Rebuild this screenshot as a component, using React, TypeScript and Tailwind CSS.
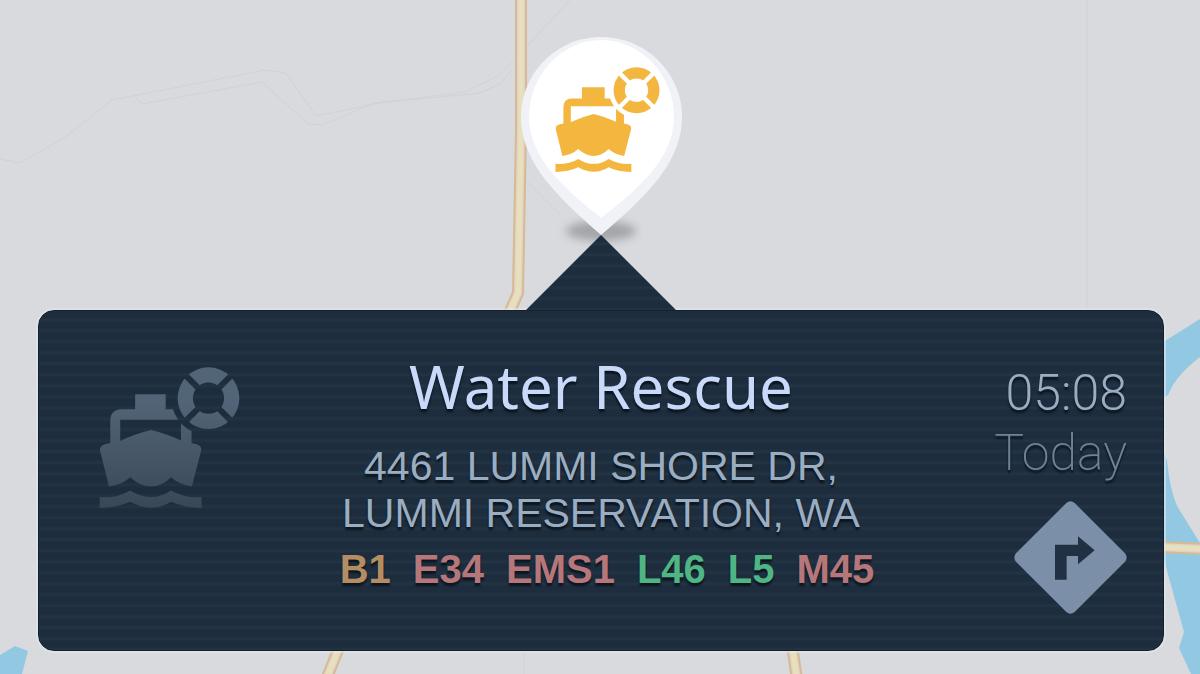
import { useId } from 'react';

const units = [
  { name: 'B1', color: 'text-[#b58d62]' },
  { name: 'E34', color: 'text-[#b57779]' },
  { name: 'EMS1', color: 'text-[#b57779]' },
  { name: 'L46', color: 'text-[#4fb584]' },
  { name: 'L5', color: 'text-[#4fb584]' },
  { name: 'M45', color: 'text-[#b57779]' },
];

function MapBackground() {
  return (
    <svg
      className="absolute inset-0 w-full h-full"
      viewBox="0 0 1200 674"
      preserveAspectRatio="xMidYMid slice"
      fill="none"
      aria-hidden="true"
    >
      {/* Water */}
      <g fill="#93c8e3">
        <path d="M1160 344 L1200 319 V357 Q1176 375 1168 395 L1160 400 Z" />
        <path d="M1160 440 L1167 461 Q1170 490 1177 506 L1200 543 V674 H1191 L1179 648 L1184 632 L1166 567 L1160 545 Z" />
        <path d="M0 655 L15 646 L28 651 L22 674 H0 Z" />
      </g>

      {/* Minor roads and trails */}
      <g stroke="#d0d2d5" strokeWidth="1">
        <path d="M0 159 L20 163 L64 138 L112 100 L265 70 L286 73 L316 116 L380 103 L465 92 L500 75 L570 0" />
        <path d="M136 97 L142 104 L262 82 L308 124 L323 125 L374 103 L430 98 L480 93 L500 84 L512 70" />
        <path d="M1087 0 V310" />
        <path d="M524 651 V674 M526 180 L560 215" />
      </g>

      {/* Highways */}
      <g strokeLinejoin="round">
        <g stroke="#d8b995" strokeWidth="12">
          <path d="M521 -5 V130 L518 293 L507 318" />
          <path d="M340 645 L326 680" />
          <path d="M792 645 L797 680" />
          <path d="M1160 547 L1205 549" />
        </g>
        <g stroke="#dfd5c5" strokeWidth="8">
          <path d="M521 -5 V130 L518 293 L507 318" />
          <path d="M340 645 L326 680" />
          <path d="M792 645 L797 680" />
          <path d="M1160 547 L1205 549" />
        </g>
        <g stroke="#e8e0bd" strokeWidth="5">
          <path d="M521 -5 V130 L518 293 L507 318" />
          <path d="M340 645 L326 680" />
          <path d="M792 645 L797 680" />
          <path d="M1160 547 L1205 549" />
        </g>
      </g>
    </svg>
  );
}

function WaterRescueIcon({ className, from, to }: { className: string; from: string; to: string }) {
  const id = useId();
  return (
    <svg className={className} viewBox="0 0 425 425" aria-hidden="true">
      <defs>
        <linearGradient id={`${id}-fill`} gradientUnits="userSpaceOnUse" x1="0" y1="0" x2="0" y2="425">
          <stop offset="0.25" stopColor={from} />
          <stop offset="1" stopColor={to} />
        </linearGradient>
        <mask id={`${id}-ship`} maskUnits="userSpaceOnUse" x="0" y="0" width="425" height="425">
          <rect width="425" height="425" fill="white" />
          <circle cx="330" cy="94" r="112" fill="black" />
        </mask>
        <mask id={`${id}-buoy`} maskUnits="userSpaceOnUse" x="0" y="0" width="425" height="425">
          <rect width="425" height="425" fill="white" />
          <circle cx="330" cy="94" r="47" fill="black" />
          <path d="M255 19 L405 169 M405 19 L255 169" stroke="black" strokeWidth="18" />
        </mask>
      </defs>
      <g fill={`url(#${id}-fill)`}>
        <g mask={`url(#${id}-ship)`}>
          <path d="M109 82 H201 V127 H244 Q279 127 279 162 V240 H247 V159 H64 V240 H34 V162 Q34 127 69 127 H109 Z" />
          <path d="M157 190 Q205 201 252 224 L292 232 Q311 237 308 252 L280 360 Q243 355 217 332 Q190 360 157 360 Q124 360 94 332 Q70 355 30 360 L3 252 Q1 237 20 232 L62 224 Q109 201 157 190 Z" />
        </g>
        <path d="M2 392 Q55 396 94 372 Q125 392 157 392 Q189 392 217 372 Q260 396 309 392 V425 Q255 424 217 406 Q189 424 157 424 Q125 424 94 406 Q55 424 2 425 Z" />
        <circle cx="330" cy="94" r="93" mask={`url(#${id}-buoy)`} />
      </g>
    </svg>
  );
}

function Marker() {
  return (
    <div className="relative flex justify-center w-[161px] h-[198px]">
      <div className="absolute bottom-[-6px] w-[70px] h-5 rounded-[50%] bg-[#a3a5aa] blur-[4px]" />
      <svg className="absolute inset-0 w-full h-full" viewBox="0 0 161 198" aria-hidden="true">
        <path d="M80 0 C36 0 0 36 0 80 C0 122 30 155 80 198 C131 155 161 122 161 80 C161 36 125 0 80 0 Z" fill="#f0f2f7" />
        <path d="M80 3 C41 3 8 38 8 80 C8 118 38 148 80 181 C123 148 153 118 153 80 C153 38 120 3 80 3 Z" fill="white" />
      </svg>
      <WaterRescueIcon className="relative mt-[30px] ml-3 w-[105px] h-[105px]" from="#f3b63f" to="#f3b63f" />
    </div>
  );
}

function DirectionsIcon() {
  return (
    <svg className="w-full h-full" viewBox="0 0 339 339" aria-hidden="true">
      <path
        d="M157 6 Q169 -4 182 6 L333 157 Q343 169 333 182 L182 333 Q169 343 157 333 L6 182 Q-4 169 6 157 Z"
        fill="#7b8fa9"
      />
      <path d="M123 236 V131 H192 V106 L242 148 L192 190 V165 H158 V236 Z" fill="#1f3142" />
    </svg>
  );
}

export default function App() {
  return (
    <main className="relative min-h-screen overflow-hidden bg-[#d8dadd] font-['Liberation_Sans',Arial,sans-serif]">
      <MapBackground />

      <div className="relative flex flex-col items-center pt-[37px] pl-[38px] pr-9 pb-[23px]">
        <Marker />

        {/* Callout arrow */}
        <div className="w-[150px] h-[75px] [clip-path:polygon(50%_0,100%_100%,0_100%)] bg-[repeating-linear-gradient(to_bottom,#1d2d3d_0,#1d2d3d_6px,#233545_9px,#1d2d3d_11px)]" />

        {/* Callout */}
        <section className="w-full grid grid-cols-[1fr_auto_1fr] rounded-2xl border border-[#14212d] ring-2 ring-[#e2e7eb]/60 pt-11 pb-9 px-9 bg-[repeating-linear-gradient(to_bottom,#1d2d3d_0,#1d2d3d_6px,#233545_9px,#1d2d3d_11px)] [text-shadow:0_3px_2px_rgba(5,12,20,0.75)]">
          <WaterRescueIcon className="w-[141px] h-[141px] mt-3 ml-6" from="#526477" to="#394857" />

          <div className="flex flex-col items-center text-center">
            <h1 className="font-['Noto_Sans','Open_Sans',sans-serif] text-[60px] leading-[62px] text-[#c9d9fa]">
              Water Rescue
            </h1>
            <p className="mt-[26px] text-[41px] leading-[47px] text-[#9badc0]">
              4461 LUMMI SHORE DR,
              <br />
              LUMMI RESERVATION, WA
            </p>
            <ul className="mt-2 pl-3 flex gap-[22px] text-[40px] leading-[48px] font-bold">
              {units.map((unit) => (
                <li key={unit.name} className={unit.color}>{unit.name}</li>
              ))}
            </ul>
          </div>

          <div className="flex flex-col items-end pt-2 font-['Roboto',sans-serif] text-[50px] leading-[60px]">
            <time className="font-light text-[#9badc0]">05:08</time>
            <span className="font-extralight text-[#6f8296]">Today</span>
            <button type="button" aria-label="Directions" className="mt-[18px] w-[113px] h-[113px] cursor-pointer">
              <DirectionsIcon />
            </button>
          </div>
        </section>
      </div>
    </main>
  );
}
